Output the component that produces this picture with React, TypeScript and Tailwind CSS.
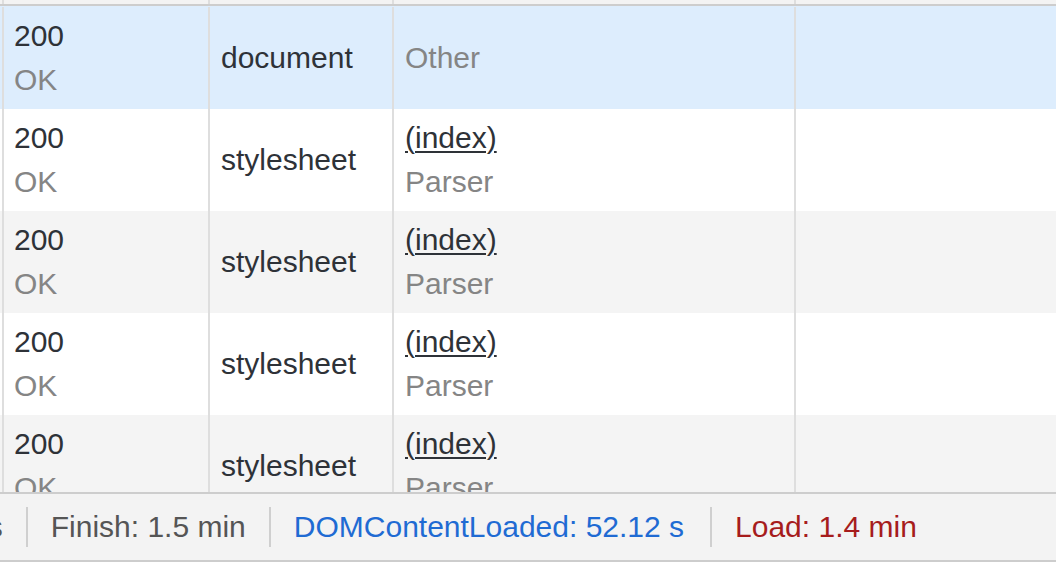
import React from 'react'

interface Row {
  status: string
  text: string
  type: string
  initiator: string | null
  initiatorSub: string
  selected?: boolean
}

const ROWS: Row[] = [
  { status: '200', text: 'OK', type: 'document', initiator: null, initiatorSub: 'Other', selected: true },
  { status: '200', text: 'OK', type: 'stylesheet', initiator: '(index)', initiatorSub: 'Parser' },
  { status: '200', text: 'OK', type: 'stylesheet', initiator: '(index)', initiatorSub: 'Parser' },
  { status: '200', text: 'OK', type: 'stylesheet', initiator: '(index)', initiatorSub: 'Parser' },
  { status: '200', text: 'OK', type: 'stylesheet', initiator: '(index)', initiatorSub: 'Parser' },
]

const font = { fontFamily: '"Liberation Sans", Arial, Helvetica, sans-serif' }

function Divider() {
  return <div className="mx-[23px] h-[40px] w-[2px] shrink-0 bg-[#cfcfcf]" />
}

export default function App() {
  return (
    <div className="flex h-[562px] w-[1056px] flex-col overflow-hidden bg-white text-[30px] leading-[44px]" style={font}>
      {/* table */}
      <div className="flex min-h-0 flex-1 flex-col overflow-hidden">
        {/* header stub */}
        <div className="flex h-[6px] shrink-0 border-b-2 border-[#cdcdcd] bg-[#f3f3f3]">
          <div className="ml-[2px] w-[206px] border-l-2 border-[#dedede]" />
          <div className="w-[184px] border-l-2 border-[#dedede]" />
          <div className="w-[402px] border-l-2 border-[#dedede]" />
          <div className="flex-1 border-l-2 border-[#dedede]" />
        </div>
        <div className="h-[1px] shrink-0 bg-[#ddedfd]" />
        {ROWS.map((r, i) => (
          <div
            key={i}
            className={`flex h-[102px] shrink-0 ${
              r.selected ? 'bg-[#ddedfd]' : i % 2 === 0 ? 'bg-[#f4f4f4]' : 'bg-white'
            }`}
          >
            <div className="ml-[2px] flex w-[206px] flex-col justify-center border-l-2 border-[#dedede] pl-[10px]">
              <span className="text-[#2e3238]">{r.status}</span>
              <span className="text-[#858585]">{r.text}</span>
            </div>
            <div className="flex w-[184px] flex-col justify-center border-l-2 border-[#dedede] pl-[11px] text-[#2e3238]">
              {r.type}
            </div>
            <div className="flex w-[402px] flex-col justify-center border-l-2 border-[#dedede] pl-[11px]">
              {r.initiator && (
                <span className="self-start text-[#2e3238] underline decoration-2 underline-offset-[3px]">
                  {r.initiator}
                </span>
              )}
              <span className="text-[#858585]">{r.initiatorSub}</span>
            </div>
            <div className="flex-1 border-l-2 border-[#dedede]" />
          </div>
        ))}
      </div>

      {/* summary bar */}
      <div className="flex h-[70px] shrink-0 items-center whitespace-nowrap border-y-2 border-[#cdcdcd] bg-[#f3f3f3] text-[#555555]">
        <span className="ml-[-129px]">resources</span>
        <Divider />
        <span>Finish: 1.5 min</span>
        <Divider />
        <span className="text-[#1f6bd3]">DOMContentLoaded: 52.12 s</span>
        <div className="ml-[26px] mr-[23px] h-[40px] w-[2px] shrink-0 bg-[#cfcfcf]" />
        <span className="text-[#a61c1c]">Load: 1.4 min</span>
      </div>
    </div>
  )
}
